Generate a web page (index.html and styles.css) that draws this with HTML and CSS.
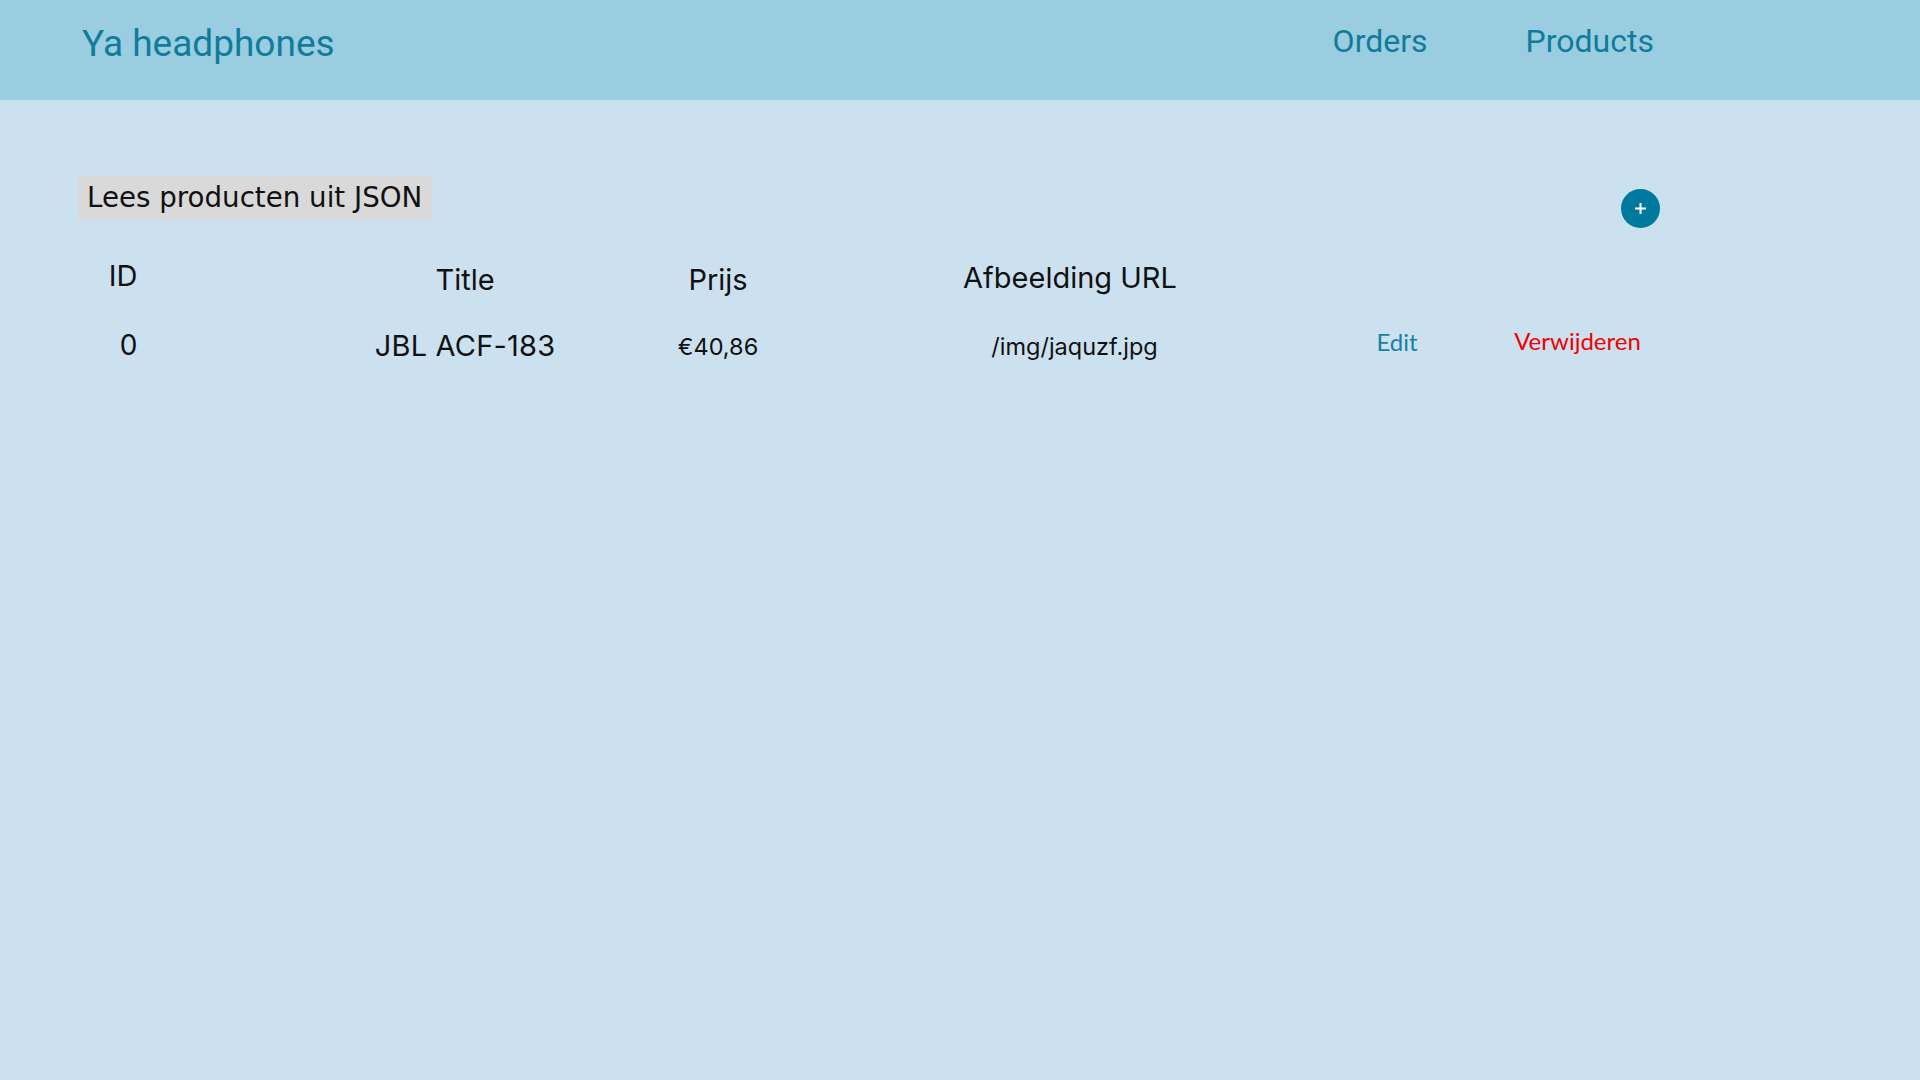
FILE: index.html
```html
<!DOCTYPE html>
<html lang="nl">
<head>
<meta charset="utf-8">
<title>Ya headphones</title>
<link rel="stylesheet" href="styles.css">
</head>
<body>
<header class="topbar">
  <div class="logo">Ya headphones</div>
  <nav class="nav">
    <a class="nav-link" href="#">Orders</a>
    <a class="nav-link" href="#">Products</a>
  </nav>
</header>
<main class="content">
  <div class="toolbar">
    <button class="json-btn">Lees producten uit JSON</button>
    <button class="add-btn" aria-label="Toevoegen">
      <svg width="13" height="13" viewBox="0 0 13 13"><path d="M6.5 1v11M1 6.5h11" stroke="#fff" stroke-width="2" fill="none"/></svg>
    </button>
  </div>
  <div class="row head">
    <div class="cell c1 h-id">ID</div>
    <div class="cell c2 h-title">Title</div>
    <div class="cell c3 h-title">Prijs</div>
    <div class="cell c4 h-url">Afbeelding URL</div>
  </div>
  <div class="row data">
    <div class="cell c1 d-id">0</div>
    <div class="cell c2 d-title">JBL ACF-183</div>
    <div class="cell c3 d-small">€40,86</div>
    <div class="cell c4 d-small d-url">/img/jaquzf.jpg</div>
    <div class="cell c5 action edit">Edit</div>
    <div class="cell c6 action delete">Verwijderen</div>
  </div>
</main>
</body>
</html>
```
FILE: styles.css
```css
html, body {
  margin: 0;
  padding: 0;
}
body {
  background: #cbe1ef;
  min-height: 1080px;
  font-family: Inter, "Liberation Sans", sans-serif;
  color: #111;
}
.topbar {
  height: 100px;
  background: #9acde0;
  display: flex;
  align-items: flex-start;
  box-sizing: border-box;
  padding-left: 82px;
}
.logo {
  font-family: Roboto, sans-serif;
  font-size: 37px;
  line-height: 37px;
  color: #0f7c9c;
  padding-top: 25px;
}
.nav {
  display: flex;
  gap: 98px;
  margin-left: 998px;
  padding-top: 25px;
}
.nav-link {
  font-family: Roboto, sans-serif;
  font-size: 32px;
  line-height: 32px;
  color: #0f7c9c;
  text-decoration: none;
}
.content {
  padding: 76px 0 0 78px;
}
.toolbar {
  display: flex;
  align-items: flex-start;
  width: 1582px;
  height: 44px;
  justify-content: space-between;
}
.json-btn {
  border: none;
  background: #d9d9d9;
  font-family: "DejaVu Sans", sans-serif;
  font-size: 27.7px;
  line-height: 44px;
  height: 44px;
  padding: 0 10px 0 9px;
  color: #111;
  margin: 0;
}
.add-btn {
  width: 39px;
  height: 39px;
  flex: none;
  border-radius: 50%;
  border: none;
  background: #00799f;
  margin: 13px 0 0 0;
  padding: 0;
  display: flex;
  align-items: center;
  justify-content: center;
}
.row {
  display: flex;
  align-items: flex-start;
}
.head {
  margin-top: 38px;
}
.data {
  margin-top: 31px;
}
.cell {
  text-align: center;
  white-space: nowrap;
  box-sizing: border-box;
}
.c1 { width: 90px; }
.c2 { width: 300px; margin-left: 147px; }
.c3 { width: 120px; margin-left: 43px; }
.c4 { width: 260px; margin-left: 162px; }
.c5 { width: 120px; margin-left: 137px; }
.c6 { width: 161px; margin-left: 40px; }
.head .cell {
  font-size: 29px;
  line-height: 35px;
}
.h-title { padding-top: 4px; }
.h-url { padding-top: 2px; }
.data .cell { line-height: 35px; }
.d-id {
  font-size: 28px;
  padding-left: 11px;
}
.d-title {
  font-size: 29px;
  letter-spacing: 0.2px;
}
.d-small {
  font-size: 23.5px;
  padding-top: 1px;
}
.d-url { padding-left: 9px; }
.data .action {
  font-family: Lato, sans-serif;
  font-size: 24px;
  line-height: 29px;
}
.edit { color: #1483a3; margin-top: -1px; }
.delete { color: #f00000; margin-top: -2px; }
```
